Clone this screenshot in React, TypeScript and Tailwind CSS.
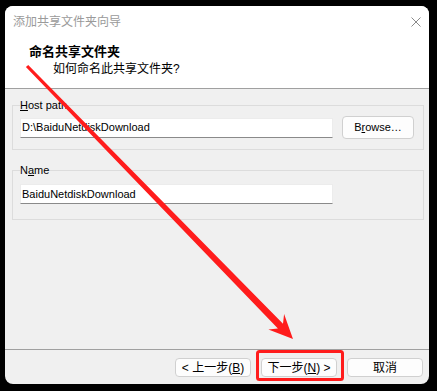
import React from 'react';

const font = "font-['Liberation_Sans','Noto_Sans_CJK_SC',sans-serif]";

const Field: React.FC<{ label: React.ReactNode; value: string; browse?: boolean; className?: string }> = ({
  label,
  value,
  browse,
  className = '',
}) => (
  <fieldset className={`border border-[#dcdcdc] pl-[7px] pr-[9px] ${className}`}>
    <legend className="px-0 text-[11px] leading-[14px] text-black">{label}</legend>
    <div className={`flex items-center gap-[9px] ${browse ? 'mt-[4px]' : 'mt-[7px]'}`}>
      <div className="w-[313px] h-[20px] bg-white border border-[#ececec] border-b-[#8a8a8a] flex items-center px-[1px] text-[11px] text-black">
        {value}
      </div>
      {browse && (
        <button className="w-[72px] h-[23px] rounded-[4px] border border-[#d0d0d0] bg-[#fdfdfd] text-[11px] text-black flex items-center justify-center">
          B<span className="underline">r</span>owse…
        </button>
      )}
    </div>
  </fieldset>
);

const FooterButton: React.FC<{ children: React.ReactNode; className?: string }> = ({ children, className = '' }) => (
  <button
    className={`w-[76px] h-[19px] rounded-[4px] border border-[#d0d0d0] bg-[#fdfdfd] text-[12px] leading-none text-black flex items-center justify-center ${className}`}
  >
    {children}
  </button>
);

export default function App() {
  // arrow geometry (tapered shaft + head), drawn as one polygon
  const arrow =
    '28.2,64.9 283.0,323.7 284.1,314.1 293,339 268.4,329.5 277.9,328.6 25.9,67.1';

  return (
    <div className={`relative w-[437px] h-[391px] bg-black pt-[6px] pl-[5px] ${font}`}>
      <div className="w-[424px] h-[378px] rounded-lg bg-[#f0f0f0] overflow-hidden flex flex-col">
        {/* header */}
        <div className="h-[83px] bg-white border-b border-[#a0a0a0] shrink-0">
          <div className="h-[32px] flex items-center justify-between pl-[8px] pr-[8px]">
            <span className="text-[12px] text-[#9a9a9a]">添加共享文件夹向导</span>
            <svg width="10" height="10" viewBox="0 0 10 10">
              <path d="M0.5 0.5 L9.5 9.5 M9.5 0.5 L0.5 9.5" stroke="#8a8a8a" strokeWidth="1" />
            </svg>
          </div>
          <div className="mt-[6px] pl-[24px] text-[13px] leading-[16px] font-bold text-black">命名共享文件夹</div>
          <div className="mt-[1px] pl-[48px] text-[12px] leading-[16px] text-black">如何命名此共享文件夹?</div>
        </div>

        {/* body */}
        <div className="flex-1 pt-[9px] pl-[7px] pr-[5px]">
          <Field
            label={
              <>
                <span className="underline">H</span>ost path
              </>
            }
            value="D:\BaiduNetdiskDownload"
            browse
            className="pb-[10px]"
          />
          <Field
            label={
              <>
                N<span className="underline">a</span>me
              </>
            }
            value="BaiduNetdiskDownload"
            className="mt-[13px] pb-[15px]"
          />
        </div>

        {/* footer */}
        <div className="h-[35px] shrink-0 border-t border-[#a0a0a0] flex justify-end items-start gap-[10px] pt-[8px] pr-[6px]">
          <FooterButton>
            &lt; 上一步(<span className="underline">B</span>)
          </FooterButton>
          <FooterButton>
            下一步(<span className="underline">N</span>) &gt;
          </FooterButton>
          <FooterButton>取消</FooterButton>
        </div>
      </div>

      {/* annotation overlay */}
      <svg className="absolute inset-0 pointer-events-none" width="437" height="391" viewBox="0 0 437 391">
        <polygon points={arrow} fill="#ff1c1c" />
        <rect x="257.5" y="351.5" width="85" height="28" rx="2" fill="none" stroke="#ff1c1c" strokeWidth="3" />
      </svg>
    </div>
  );
}
